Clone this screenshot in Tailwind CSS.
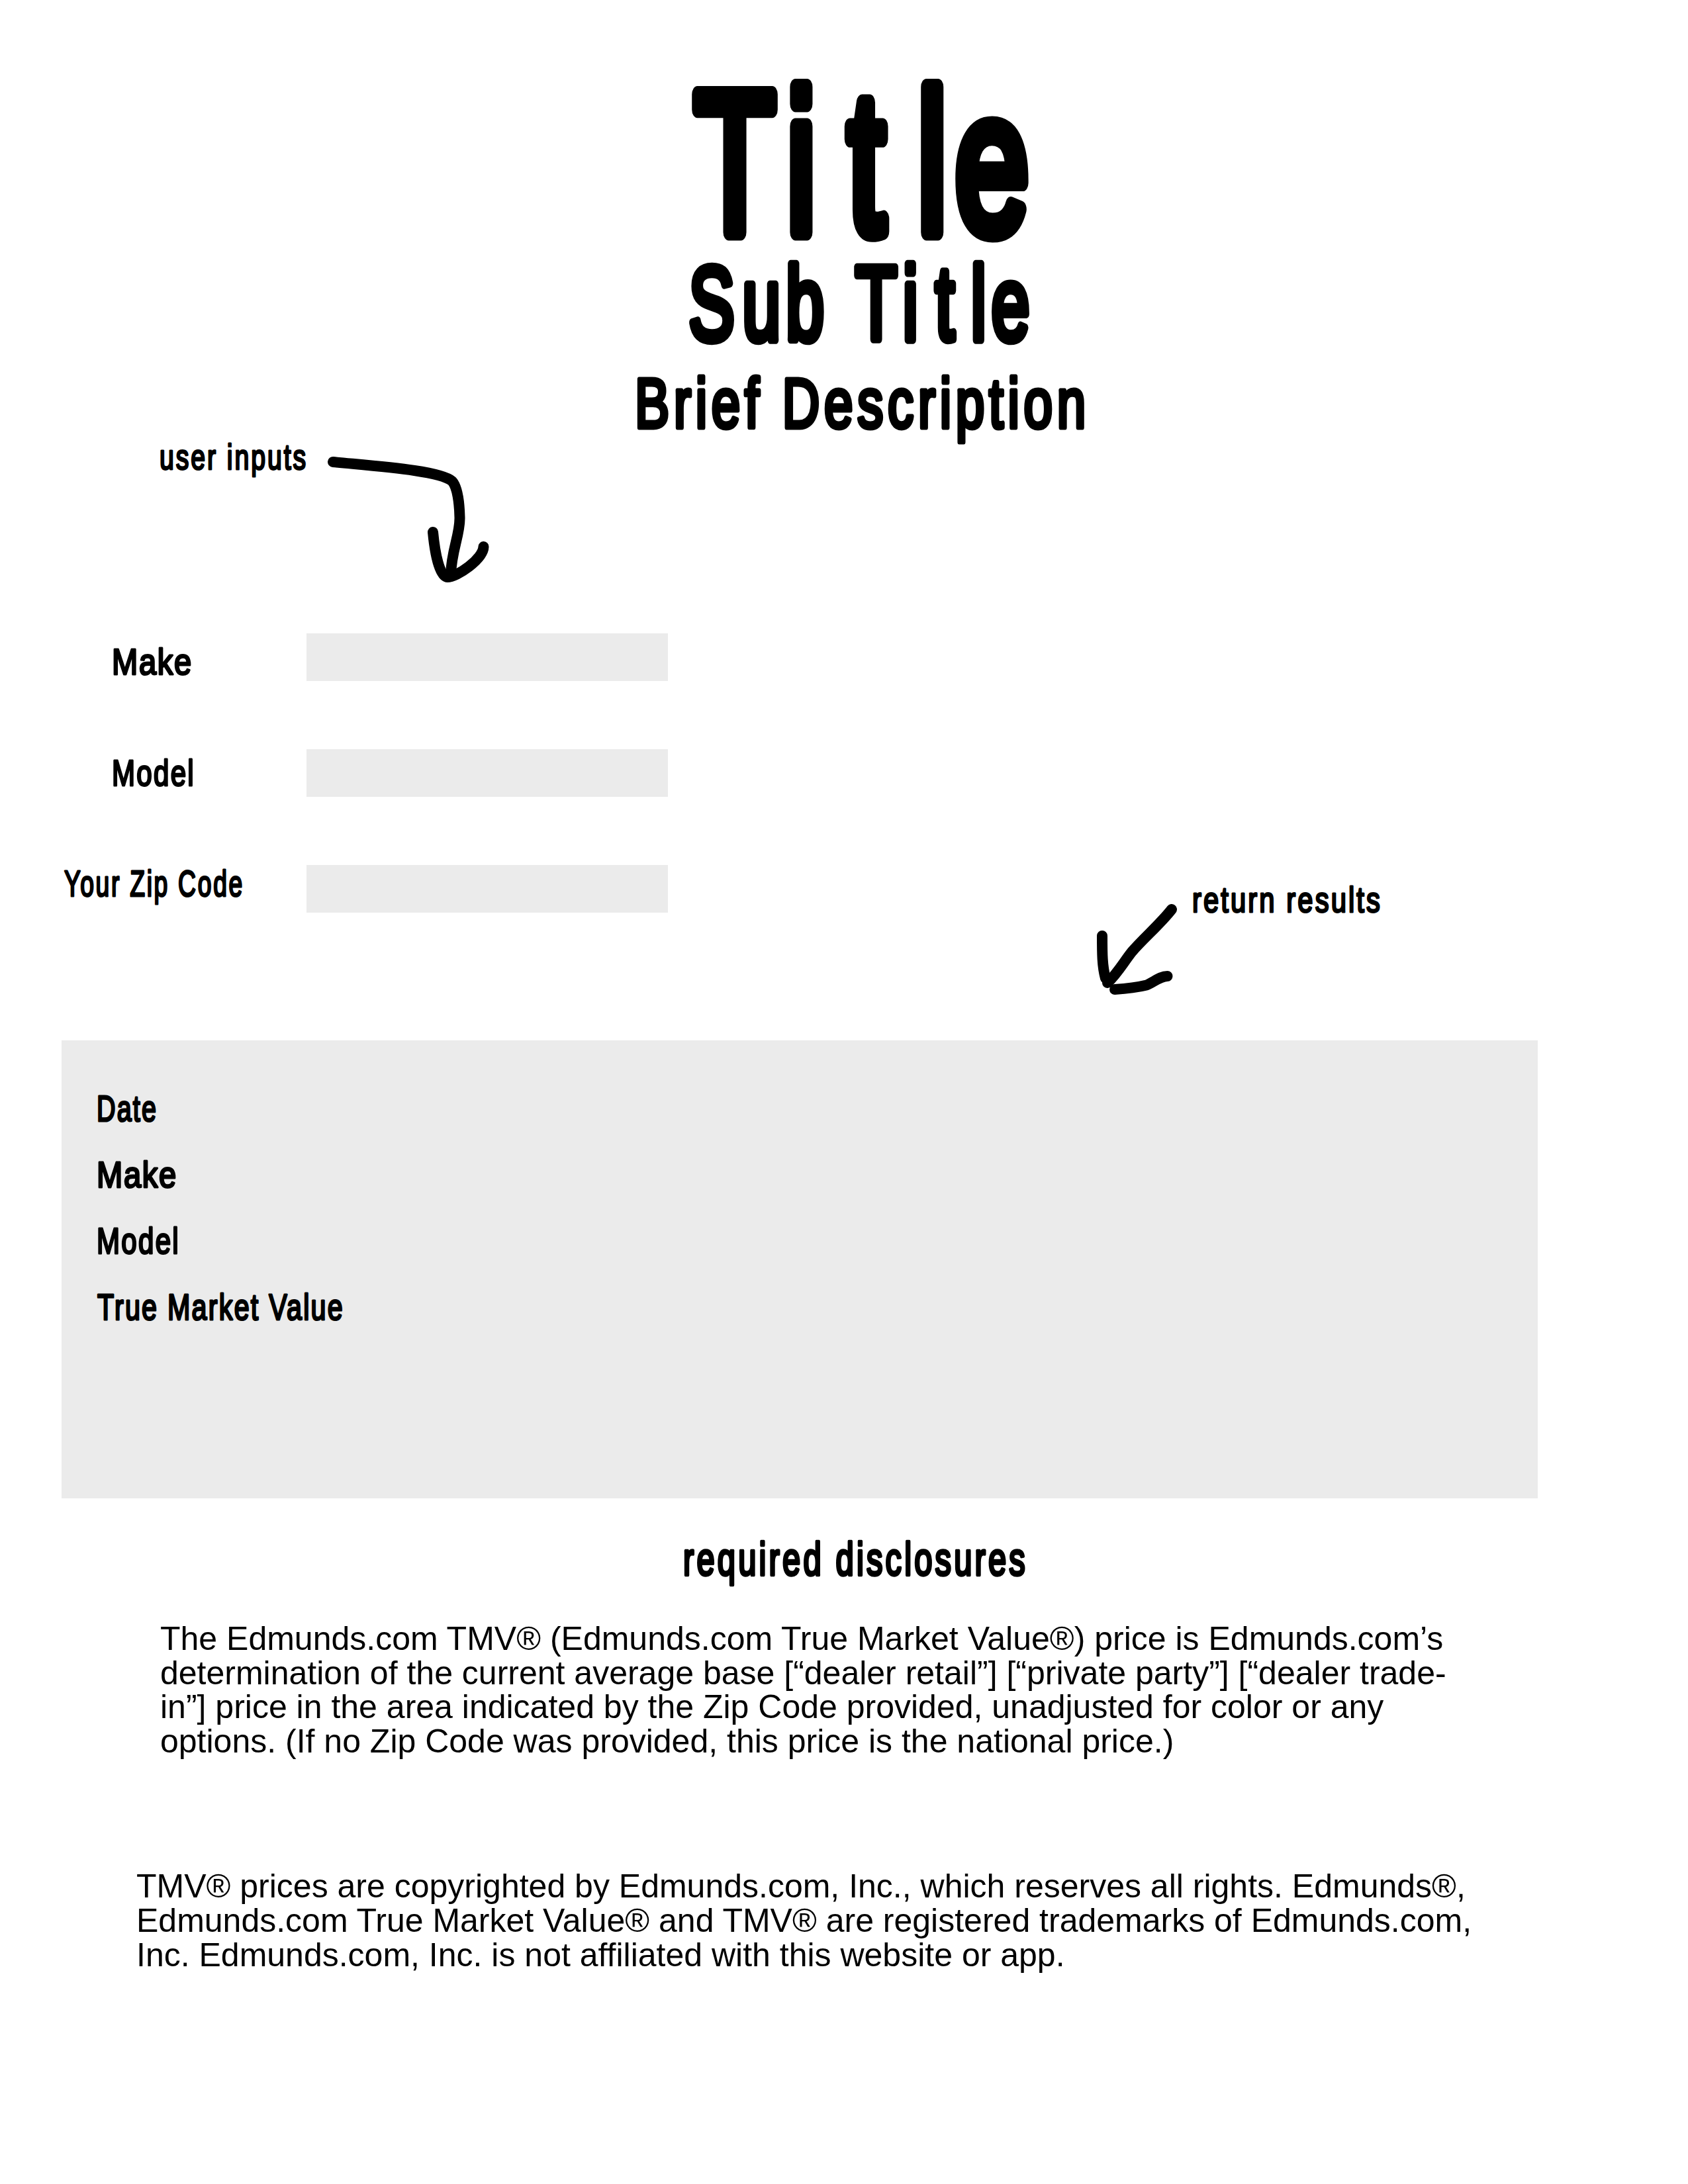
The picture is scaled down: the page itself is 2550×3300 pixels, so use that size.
<!DOCTYPE html>
<html lang="en">
<head>
<meta charset="utf-8">
<title>Title</title>
<script src="https://cdn.jsdelivr.net/npm/@tailwindcss/browser@4"></script>
</head>
<body class="bg-white text-black">
<main class="flex h-[3300px] w-[2550px] flex-col overflow-hidden font-['Liberation_Sans',sans-serif]">

  <!-- Headings: condensed, heavy, with rounded stroke ends -->
  <header class="flex flex-col pt-[110px] pl-[950px]">
    <h1><svg class="block h-[260px] w-[700px] overflow-visible fill-black stroke-black stroke-[25px] [stroke-linejoin:round]"><text transform="scale(.66 1)" x="150 361 501.500 660.600 747" y="241" font-size="303">Title</text></svg></h1>
    <h2><svg class="block h-[180px] w-[700px] overflow-visible fill-black stroke-black stroke-[12.5px] [stroke-linejoin:round]"><text transform="scale(.66 1)" x="137 260 359.500 440 518 627 701.500 783 830" y="143" font-size="157">Sub Title</text></svg></h2>
    <h3><svg class="block h-[110px] w-[700px] overflow-visible fill-black stroke-black stroke-[7px] [stroke-linejoin:round]"><text x="9" y="96" font-size="105" letter-spacing="9" textLength="688" lengthAdjust="spacingAndGlyphs">Brief Description</text></svg></h3>
  </header>

  <!-- Note pointing at the form -->
  <div class="flex h-[240px] pl-[240px]">
    <svg class="h-[240px] w-[240px] overflow-visible fill-black stroke-black stroke-[3px] [stroke-linejoin:round]"><text x="1" y="49" font-size="54" letter-spacing="4" textLength="224" lengthAdjust="spacingAndGlyphs">user inputs</text></svg>
    <svg class="h-[240px] w-[280px] fill-none stroke-black stroke-[16px] [stroke-linecap:round] [stroke-linejoin:round]" viewBox="480 660 280 240">
      <path d="M503 698C575 705 664 711 683 727C691 736 694 760 694.5 782C695 808 682 832 681 868"/>
      <path d="M654 804C657 836 664 872 676 872C690 872 730 845 730.500 826"/>
    </svg>
  </div>

  <section class="flex h-[672px] pl-[90px]">
    <!-- Form -->
    <div class="flex w-[373px] flex-col pt-[60px]">
      <svg class="h-[167.5px] w-[300px] shrink-0 overflow-visible fill-black stroke-black stroke-[3px] [stroke-linejoin:round]"><text x="79" y="59" font-size="55" letter-spacing="2" textLength="122" lengthAdjust="spacingAndGlyphs">Make</text></svg>
      <svg class="h-[167.5px] w-[300px] shrink-0 overflow-visible fill-black stroke-black stroke-[3px] [stroke-linejoin:round]"><text x="79" y="59" font-size="55" letter-spacing="3" textLength="126" lengthAdjust="spacingAndGlyphs">Model</text></svg>
      <svg class="h-[167.5px] w-[300px] shrink-0 overflow-visible fill-black stroke-black stroke-[3px] [stroke-linejoin:round]"><text x="7" y="59" font-size="55" letter-spacing="4" textLength="272" lengthAdjust="spacingAndGlyphs">Your Zip Code</text></svg>
    </div>
    <div class="flex w-[546px] flex-col gap-[103px] pt-[57px]">
      <div class="h-[72px] bg-[#ebebeb]"></div>
      <div class="h-[72px] bg-[#ebebeb]"></div>
      <div class="h-[72px] bg-[#ebebeb]"></div>
    </div>

    <!-- Note pointing at the results -->
    <div class="flex pt-[420px] pl-[631px]">
      <svg class="h-[200px] w-[160px] fill-none stroke-black stroke-[16px] [stroke-linecap:round] [stroke-linejoin:round]" viewBox="1640 1320 160 200">
        <path d="M1770 1374C1753 1396 1728 1417 1710 1438C1698 1453 1688 1471 1673 1485"/>
        <path d="M1665 1414C1665 1440 1665 1460 1670 1478"/>
        <path d="M1684 1495C1700 1494 1718 1492 1732 1488.500C1742 1485 1752 1475 1763.500 1475"/>
      </svg>
      <svg class="h-[80px] w-[300px] overflow-visible fill-black stroke-black stroke-[3px] [stroke-linejoin:round]"><text x="1" y="58" font-size="54" letter-spacing="4" textLength="287" lengthAdjust="spacingAndGlyphs">return results</text></svg>
    </div>
  </section>

  <!-- Results -->
  <section class="ml-[93px] flex h-[692px] w-[2230px] shrink-0 flex-col bg-[#ebebeb] pt-[72px] pl-[47px]">
    <svg class="h-[100px] w-[420px] overflow-visible fill-black stroke-black stroke-[3px] [stroke-linejoin:round]"><text x="6" y="50" font-size="55" letter-spacing="3" textLength="92" lengthAdjust="spacingAndGlyphs">Date</text></svg>
    <svg class="h-[100px] w-[420px] overflow-visible fill-black stroke-black stroke-[3px] [stroke-linejoin:round]"><text x="6" y="50" font-size="55" letter-spacing="2" textLength="122" lengthAdjust="spacingAndGlyphs">Make</text></svg>
    <svg class="h-[100px] w-[420px] overflow-visible fill-black stroke-black stroke-[3px] [stroke-linejoin:round]"><text x="6" y="50" font-size="55" letter-spacing="3" textLength="126" lengthAdjust="spacingAndGlyphs">Model</text></svg>
    <svg class="h-[100px] w-[420px] overflow-visible fill-black stroke-black stroke-[3px] [stroke-linejoin:round]"><text x="7" y="50" font-size="55" letter-spacing="3" textLength="373" lengthAdjust="spacingAndGlyphs">True Market Value</text></svg>
  </section>

  <!-- Disclosures -->
  <footer class="flex flex-col">
    <h4 class="pt-[56px] pl-[1030px]"><svg class="block h-[80px] w-[530px] overflow-visible fill-black stroke-black stroke-[4.5px] [stroke-linejoin:round]"><text x="2" y="60" font-size="71" letter-spacing="6" textLength="521" lengthAdjust="spacingAndGlyphs">required disclosures</text></svg></h4>
    <p class="mt-[51px] ml-[242px] text-[50px] leading-[51.6px] whitespace-nowrap">The Edmunds.com TMV® (Edmunds.com True Market Value®) price is Edmunds.com’s<br>determination of the current average base [“dealer retail”] [“private party”] [“dealer trade-<br>in”] price in the area indicated by the Zip Code provided, unadjusted for color or any<br>options. (If no Zip Code was provided, this price is the national price.)</p>
    <p class="mt-[168px] ml-[206px] text-[50px] leading-[51.6px] whitespace-nowrap">TMV® prices are copyrighted by Edmunds.com, Inc., which reserves all rights. Edmunds®,<br>Edmunds.com True Market Value® and TMV® are registered trademarks of Edmunds.com,<br>Inc. Edmunds.com, Inc. is not affiliated with this website or app.</p>
  </footer>
</main>
</body>
</html>
